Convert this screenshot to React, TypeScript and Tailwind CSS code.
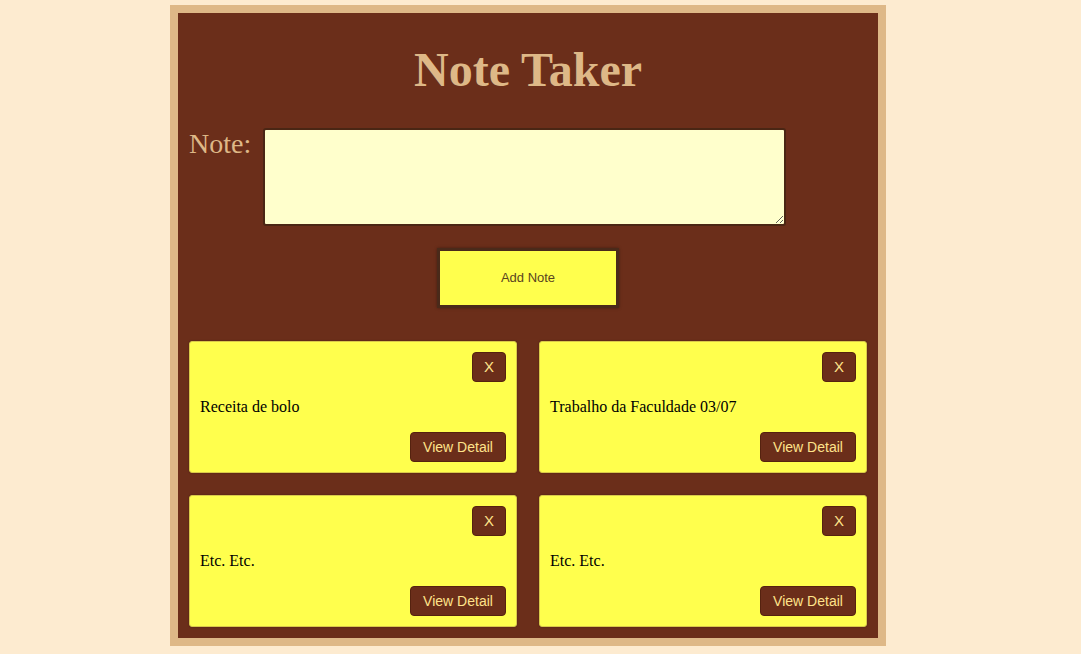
import { useState } from "react";

const initialNotes = [
  { id: 1, text: "Receita de bolo" },
  { id: 2, text: "Trabalho da Faculdade 03/07" },
  { id: 3, text: "Etc. Etc." },
  { id: 4, text: "Etc. Etc." },
];

const serif = "font-['Liberation_Serif','Times_New_Roman',serif]";
const sans = "font-['Liberation_Sans',Arial,sans-serif]";

export default function App() {
  const [notes, setNotes] = useState(initialNotes);
  const [draft, setDraft] = useState("");

  const addNote = () => {
    if (!draft.trim()) return;
    setNotes([...notes, { id: Date.now(), text: draft }]);
    setDraft("");
  };

  return (
    <div className="min-h-[654px] bg-[#fdebd0] pt-[5px] pb-[8px]">
      <div className="ml-[170px] w-[716px] border-8 border-[#deb887] bg-[#6b2e1a] px-[11px] pt-[29px] pb-[11px]">
        {/* Header */}
        <h1 className={`${serif} text-center text-[48px] leading-[56px] font-bold text-[#deb887]`}>
          Note Taker
        </h1>

        {/* Input */}
        <div className="mt-[30px] flex items-start gap-[12px]">
          <label className={`${serif} text-[28px] leading-[32px] text-[#deb887]`}>
            Note:
          </label>
          <textarea
            value={draft}
            onChange={(e) => setDraft(e.target.value)}
            className="block h-[98px] w-[523px] rounded-[3px] border-2 border-[#4a2614] bg-[#ffffcc] p-1 outline-none"
          />
        </div>

        <div className="mt-[22px] flex justify-center">
          <button
            onClick={addNote}
            className={`${sans} h-[60px] w-[182px] border-[3px] border-[#4a2a1a] bg-[#ffff4d] text-[13px] text-[#5a4420] shadow-[0_0_3px_rgba(0,0,0,0.35)]`}
          >
            Add Note
          </button>
        </div>

        {/* Notes */}
        <div className="mt-[33px] grid grid-cols-2 gap-[22px]">
          {notes.map((note) => (
            <div
              key={note.id}
              className="flex flex-col rounded-[3px] border border-[#d9c94a] bg-[#ffff4d] p-[10px] shadow-[0_0_2px_rgba(0,0,0,0.3)]"
            >
              <button
                onClick={() => setNotes(notes.filter((n) => n.id !== note.id))}
                className={`${sans} h-[30px] w-[34px] self-end rounded-[4px] border border-[#55220f] bg-[#6b2e1a] text-[15px] text-[#ffe38a]`}
              >
                X
              </button>
              <p className={`${serif} my-[16px] text-[16px] leading-[18px] text-black`}>
                {note.text}
              </p>
              <button
                className={`${sans} h-[30px] w-[96px] self-end rounded-[4px] border border-[#55220f] bg-[#6b2e1a] text-[14px] text-[#ffe38a]`}
              >
                View Detail
              </button>
            </div>
          ))}
        </div>
      </div>
    </div>
  );
}
